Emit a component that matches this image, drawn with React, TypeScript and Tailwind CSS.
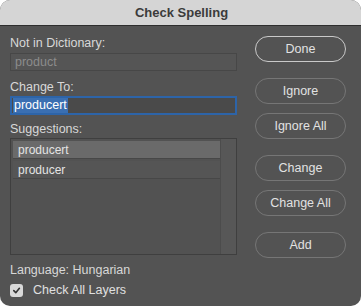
import React, { useState } from "react";

const Button: React.FC<{ label: string; primary?: boolean; className?: string }> = ({ label, primary, className }) => (
  <button
    className={`h-[26px] w-[91px] rounded-full border text-[12.5px] text-[#e2e2e2] ${
      primary ? "border-[#c9c9c9]" : "border-[#767676]"
    } ${className ?? ""}`}
  >
    {label}
  </button>
);

const App: React.FC = () => {
  const [checkAll, setCheckAll] = useState(true);
  const suggestions = ["producert", "producer"];

  return (
    <div className="w-[361px] h-[306px] bg-[#535353] rounded-[10px] overflow-hidden flex flex-col font-['Liberation_Sans',Arial,sans-serif]">
      {/* Title bar */}
      <div className="h-[26px] shrink-0 bg-[#d5d5d5] border-b border-[#2e2e2e] flex items-center justify-center">
        <span className="text-[13px] font-bold text-[#3b3b3b] pl-[2px]">Check Spelling</span>
      </div>

      <div className="flex flex-1 pl-[10px] pr-[15px]">
        {/* Left column */}
        <div className="w-[227px] flex flex-col pt-[10px]">
          <label className="text-[12.5px] leading-[15px] text-[#d8d8d8]">Not in Dictionary:</label>
          <div className="mt-[2px] h-[18px] border border-[#474747] bg-[#555555] px-[4px] text-[12.5px] leading-[16px] text-[#8c8c8c]">
            product
          </div>

          <label className="mt-[9px] text-[12.5px] leading-[15px] text-[#d8d8d8]">Change To:</label>
          <div className="mt-[1px] h-[19px] border-2 border-[#2d64a8] bg-[#4a4a4a] px-[1px] flex items-center">
            <span className="bg-[#3a6fb2] text-white text-[12.5px] leading-[15px] px-[1px]">producert</span>
          </div>

          <label className="mt-[7px] text-[12.5px] leading-[15px] text-[#d8d8d8]">Suggestions:</label>
          <div className="mt-[1px] h-[117px] border border-[#3f3f3f] bg-[#525252] flex">
            <div className="flex-1 pl-[2px] pt-[2px] flex flex-col gap-[2px]">
              {suggestions.map((s, i) => (
                <div
                  key={s}
                  className={`h-[18px] pl-[5px] text-[12px] leading-[18px] text-[#e4e4e4] border-b border-[#474747] ${
                    i === 0 ? "bg-[#6a6a6a]" : "bg-[#555555]"
                  }`}
                >
                  {s}
                </div>
              ))}
            </div>
            <div className="w-[16px] bg-[#575757] border-l border-[#4c4c4c]" />
          </div>

          <div className="mt-[8px] text-[12.5px] leading-[15px] text-[#d8d8d8]">Language: Hungarian</div>

          <label className="mt-[5px] flex items-center gap-[10px] cursor-pointer" onClick={() => setCheckAll(!checkAll)}>
            <span className="w-[13px] h-[13px] rounded-[3px] bg-[#d9d9d9] flex items-center justify-center">
              {checkAll && (
                <svg width="9" height="9" viewBox="0 0 10 10">
                  <path d="M2 5.2 L4.2 7.4 L8.2 2.6" fill="none" stroke="#333" strokeWidth="1.8" strokeLinecap="round" strokeLinejoin="round" />
                </svg>
              )}
            </span>
            <span className="text-[12.5px] leading-[15px] text-[#e0e0e0]">Check All Layers</span>
          </label>
        </div>

        {/* Right column */}
        <div className="flex-1 flex flex-col items-end pt-[10px]">
          <Button label="Done" primary />
          <Button label="Ignore" className="mt-[16px]" />
          <Button label="Ignore All" className="mt-[9px]" />
          <Button label="Change" className="mt-[16px]" />
          <Button label="Change All" className="mt-[9px]" />
          <Button label="Add" className="mt-[16px]" />
        </div>
      </div>
    </div>
  );
};

export default App;
